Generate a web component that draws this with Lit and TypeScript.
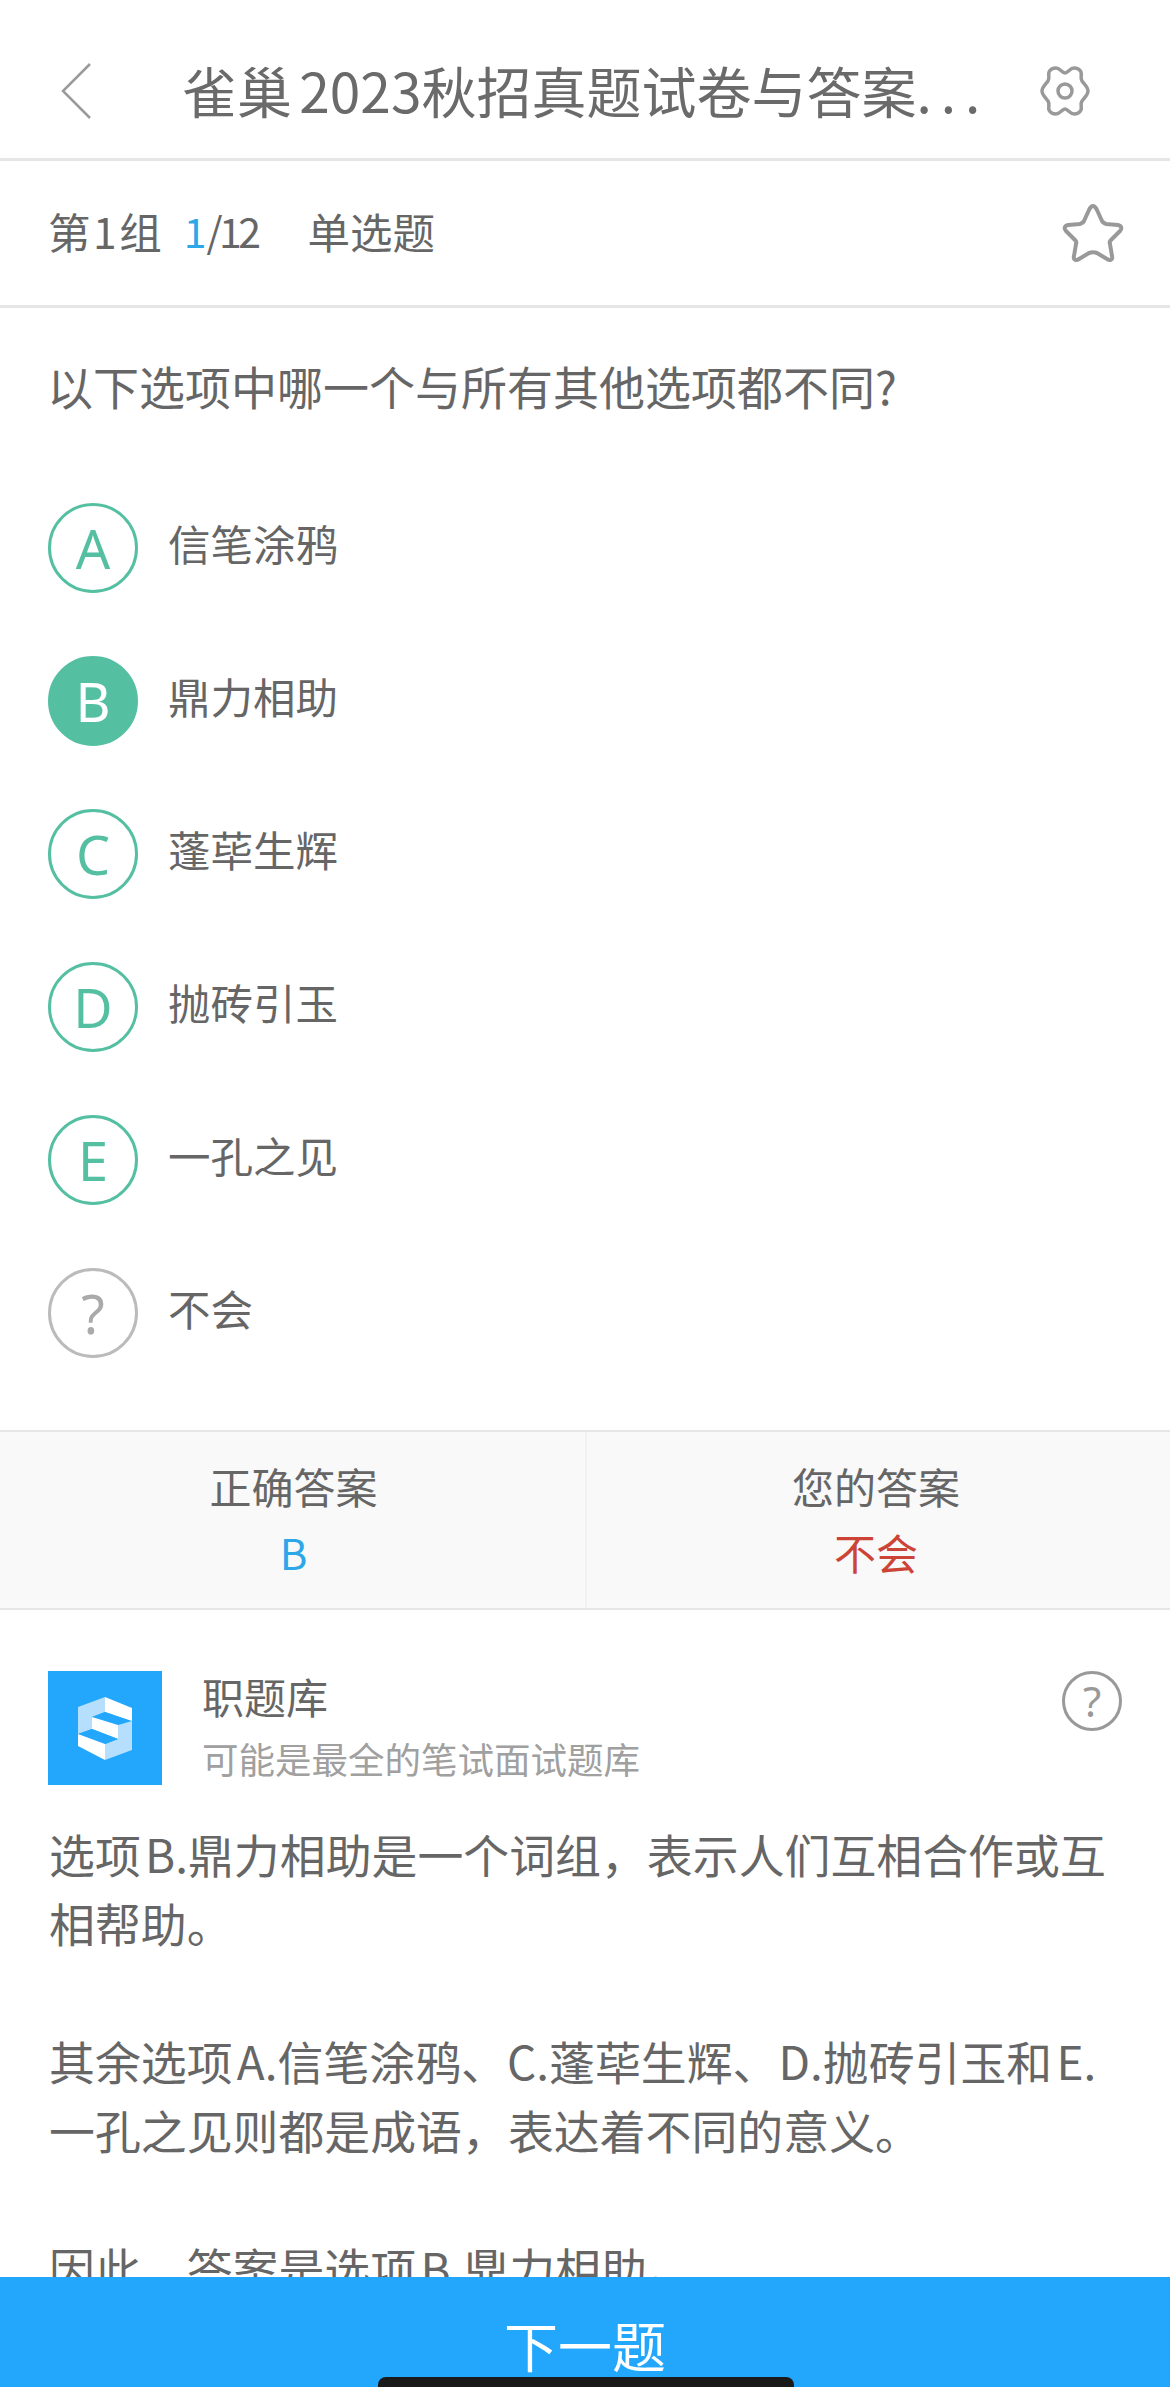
import { LitElement, html, css } from "lit";
import { customElement } from "lit/decorators.js";

const OPTIONS = [
  { key: "A", text: "信笔涂鸦", cls: "" },
  { key: "B", text: "鼎力相助", cls: "filled" },
  { key: "C", text: "蓬荜生辉", cls: "" },
  { key: "D", text: "抛砖引玉", cls: "" },
  { key: "E", text: "一孔之见", cls: "" },
  { key: "?", text: "不会", cls: "unknown" },
];

@customElement("app-root")
export class AppRoot extends LitElement {
  static styles = css`
    :host {
      display: flex;
      flex-direction: column;
      width: 1170px;
      height: 2387px;
      overflow: hidden;
      background: #fff;
      color: #666;
      font-family: "Noto Sans CJK SC", "Liberation Sans", sans-serif;
      font-weight: 400;
    }
    .main { flex: 1; min-height: 0; overflow: hidden; }
    .header {
      height: 158px;
      box-sizing: content-box;
      border-bottom: 3px solid #e6e6e6;
      display: flex;
      align-items: center;
      padding: 0 0 0 60px;
    }
    .back { width: 32px; height: 58px; margin-top: 24px; flex: none; }
    .title {
      font-size: 55px;
      line-height: 70px;
      margin: 20px 0 0 90px;
      white-space: nowrap;
      color: #6a6a6a;
      flex: none;
      width: 812px;
      word-spacing: -5px;
    }
    .dots { letter-spacing: 9px; }
    .gear { width: 52px; height: 52px; margin: 24px 0 0 45px; flex: none; }
    .sub {
      height: 144px;
      border-bottom: 3px solid #e6e6e6;
      display: flex;
      align-items: center;
      padding: 0 46px 0 48px;
      font-size: 42.5px;
    }
    .meta { display: flex; margin-bottom: 6px; }
    .group { word-spacing: -7px; }
    .blue { color: #2ea7e8; margin-left: 22px; font-size: 41px; }
    .count { letter-spacing: -3.5px; font-size: 41px; }
    .type { margin-left: 50px; }
    .star { margin-left: auto; width: 62px; height: 60px; }
    .question {
      font-size: 46px;
      line-height: 60px;
      padding: 47px 49px 0 47px;
    }
    .options { padding: 88px 48px 0; display: flex; flex-direction: column; gap: 63px; }
    .opt { display: flex; align-items: center; gap: 30px; height: 90px; font-size: 42.5px; }
    .opt-text { margin-bottom: 12px; }
    .circle {
      width: 90px;
      height: 90px;
      box-sizing: border-box;
      border: 3px solid #55bfa2;
      border-radius: 50%;
      color: #55bfa2;
      font-family: "Noto Sans", "Liberation Sans", sans-serif;
      font-size: 54px;
      line-height: 1;
      display: flex;
      align-items: center;
      justify-content: center;
      flex: none;
    }
    .circle.filled { background: #55bfa2; color: #fff; }
    .circle.unknown { border-color: #bbb; color: #aaa; }
    .answers {
      margin-top: 72px;
      height: 176px;
      border-top: 2px solid #e6e6e6;
      border-bottom: 2px solid #e6e6e6;
      background: #f9f9f9;
      display: grid;
      grid-template-columns: 585px 585px;
      text-align: center;
      font-size: 42px;
    }
    .answer-a { padding: 24px 0 0 2px; box-sizing: border-box; }
    .answer-b { padding: 24px 5px 0 0; box-sizing: border-box; border-left: 2px solid #f2f2f2; }
    .label { line-height: 60px; height: 66px; }
    .val { line-height: 60px; }
    .blue-val { color: #2ea7e8; }
    .red-val { color: #cc4436; }
    .source { display: flex; padding: 61px 48px 0; }
    .logo { width: 114px; height: 114px; flex: none; }
    .source-text { margin-left: 40px; }
    .name { font-size: 42px; line-height: 60px; margin-top: -5px; }
    .desc { font-size: 36.5px; line-height: 52px; color: #a0a0a0; margin-top: 7px; }
    .help {
      margin-left: auto;
      width: 60px;
      height: 60px;
      box-sizing: border-box;
      border: 3px solid #999;
      border-radius: 50%;
      color: #999;
      font-family: "Noto Sans", "Liberation Sans", sans-serif;
      font-size: 42px;
      line-height: 1;
      display: flex;
      align-items: center;
      justify-content: center;
    }
    .body { padding: 34px 49px 0; font-size: 45.9px; line-height: 69px; word-spacing: -6px; }
    .body p { margin: 0 0 69px; white-space: nowrap; }
    .next {
      height: 110px;
      flex: none;
      background: #22a7fd;
      color: #fff;
      font-size: 54px;
      position: relative;
      display: flex;
      justify-content: center;
      padding-top: 26px;
      box-sizing: border-box;
      line-height: 84px;
    }
    .home {
      position: absolute;
      left: 378px;
      top: 100px;
      width: 416px;
      height: 20px;
      background: #1a1a1a;
      border-radius: 8px;
    }
  `;

  render() {
    return html`
      <div class="main">
        <div class="header">
          <svg class="back" viewBox="0 0 32 58" fill="none" stroke="#9a9a9a" stroke-width="2.5">
            <path d="M30 2 L3 29 L30 56" />
          </svg>
          <div class="title">雀巢 2023秋招真题试卷与答案<span class="dots">...</span></div>
          <svg class="gear" viewBox="0 0 52 52" fill="none" stroke="#999" stroke-width="3.5" stroke-linejoin="round">
            <path d="M17 3 C21 3 23 8 26 8 C29 8 31 3 35 3 C38 3 41 5 42 7 C43 10 41 13 43 16 C45 19 49 22 49 26 C49 30 45 33 43 36 C41 39 43 42 42 45 C41 47 38 49 35 49 C31 49 29 44 26 44 C23 44 21 49 17 49 C14 49 11 47 10 45 C9 42 11 39 9 36 C7 33 3 30 3 26 C3 22 7 19 9 16 C11 13 9 10 10 7 C11 5 14 3 17 3 Z" />
            <circle cx="26" cy="26" r="7" />
          </svg>
        </div>
        <div class="sub">
          <div class="meta">
            <span class="group">第 1 组</span>
            <span class="blue">1</span><span class="count">/12</span>
            <span class="type">单选题</span>
          </div>
          <svg class="star" viewBox="0 0 62 60" fill="none" stroke="#999" stroke-width="4" stroke-linejoin="round">
            <path d="M31 3 C33 3 34 5 35 7 L40 18 C41 20 42 20 44 21 L56 22 C60 23 60 26 58 28 L49 37 C48 38 47 39 48 41 L50 53 C51 57 48 58 45 56 L35 50 C32 49 30 49 27 50 L17 56 C14 58 11 57 12 53 L14 41 C15 39 14 38 13 37 L4 28 C2 26 2 23 6 22 L18 21 C20 20 21 20 22 18 L27 7 C28 5 29 3 31 3 Z" />
          </svg>
        </div>
        <div class="question">以下选项中哪一个与所有其他选项都不同?</div>
        <div class="options">
          ${OPTIONS.map(
            (o) => html`<div class="opt">
              <div class="circle ${o.cls}">${o.key}</div>
              <span class="opt-text">${o.text}</span>
            </div>`
          )}
        </div>
        <div class="answers">
          <div class="answer-a">
            <div class="label">正确答案</div>
            <div class="val blue-val">B</div>
          </div>
          <div class="answer-b">
            <div class="label">您的答案</div>
            <div class="val red-val">不会</div>
          </div>
        </div>
        <div class="source">
          <svg class="logo" viewBox="0 0 114 114">
            <rect width="114" height="114" fill="#22a7fd" />
            <polygon points="30,36 57,26 57,41 44,46 44,58 30,63" fill="#b5dffc" />
            <polygon points="57,26 84,37 84,50 57,41" fill="#fff" />
            <polygon points="44,46 57,41 82,50 70,54" fill="#22a7fd" />
            <polygon points="44,46 70,54 70,68 44,58" fill="#fff" />
            <polygon points="70,54 84,50 84,79 57,89 57,73 70,68" fill="#b5dffc" />
            <polygon points="30,63 44,58 70,68 57,73" fill="#22a7fd" />
            <polygon points="30,63 57,73 57,89 30,75" fill="#fff" />
          </svg>
          <div class="source-text">
            <div class="name">职题库</div>
            <div class="desc">可能是最全的笔试面试题库</div>
          </div>
          <div class="help">?</div>
        </div>
        <div class="body">
          <p>选项 B.鼎力相助是一个词组，表示人们互相合作或互<br />相帮助。</p>
          <p>其余选项 A.信笔涂鸦、C.蓬荜生辉、D.抛砖引玉和 E.<br />一孔之见则都是成语，表达着不同的意义。</p>
          <p>因此，答案是选项 B.鼎力相助。</p>
        </div>
      </div>
      <div class="next">下一题<div class="home"></div></div>
    `;
  }
}
